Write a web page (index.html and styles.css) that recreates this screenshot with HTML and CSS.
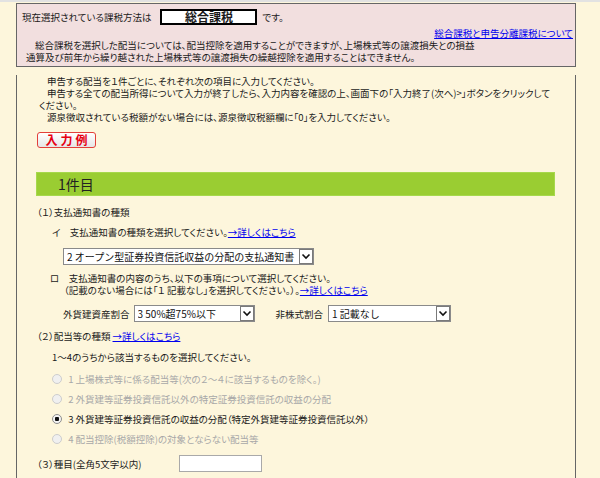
FILE: index.html
```html
<!DOCTYPE html>
<html lang="ja">
<head>
  <meta charset="UTF-8" />
  <title>配当所得の入力</title>
  <link rel="stylesheet" href="styles.css">
</head>
<body>
  <div class="page">

    <div class="notice">
      <div class="current">
        <span>現在選択されている課税方法は</span>
        <span class="method">総合課税</span>
        <span>です。</span>
      </div>
      <div class="notice-link"><a href="#">総合課税と申告分離課税について</a></div>
      <p class="notice-text">総合課税を選択した配当については、配当控除を適用することができますが、上場株式等の譲渡損失との損益<br>通算及び前年から繰り越された上場株式等の譲渡損失の繰越控除を適用することはできません。</p>
    </div>

    <div class="content">
      <div class="guide">
        <p>申告する配当を１件ごとに、それぞれ次の項目に入力してください。</p>
        <p>申告する全ての配当所得について入力が終了したら、入力内容を確認の上、画面下の「入力終了(次へ)&gt;」ボタンをクリックして<br>ください。</p>
        <p>源泉徴収されている税額がない場合には、源泉徴収税額欄に「0」を入力してください。</p>
      </div>

      <button class="example-btn">入力例</button>

      <h2 class="item-title">1件目</h2>

      <div class="label">（１）支払通知書の種類</div>
      <div class="sub sub-i">イ　支払通知書の種類を選択してください。<a href="#">→詳しくはこちら</a></div>
      <div class="select select-kind">
        <select>
          <option>2 オープン型証券投資信託収益の分配の支払通知書</option>
        </select>
        <svg class="arrow" width="14" height="15" viewBox="0 0 14 15"><rect x="0.5" y="0.5" width="13" height="14" fill="#fff" stroke="#7a7a7a"/><polyline points="3.5,5.5 7,9 10.5,5.5" fill="none" stroke="#111" stroke-width="1.6"/></svg>
      </div>

      <div class="sub sub-ro">ロ　支払通知書の内容のうち、以下の事項について選択してください。</div>
      <div class="sub-note">（記載のない場合には「１ 記載なし」を選択してください。）。<a href="#">→詳しくはこちら</a></div>

      <div class="ratio-row">
        <span>外貨建資産割合</span>
        <div class="select select-foreign">
          <select>
            <option>3 50%超75%以下</option>
          </select>
          <svg class="arrow" width="14" height="15" viewBox="0 0 14 15"><rect x="0.5" y="0.5" width="13" height="14" fill="#fff" stroke="#7a7a7a"/><polyline points="3.5,5.5 7,9 10.5,5.5" fill="none" stroke="#111" stroke-width="1.6"/></svg>
        </div>
        <span class="ratio-second">非株式割合</span>
        <div class="select select-stock">
          <select>
            <option>1 記載なし</option>
          </select>
          <svg class="arrow" width="14" height="15" viewBox="0 0 14 15"><rect x="0.5" y="0.5" width="13" height="14" fill="#fff" stroke="#7a7a7a"/><polyline points="3.5,5.5 7,9 10.5,5.5" fill="none" stroke="#111" stroke-width="1.6"/></svg>
        </div>
      </div>

      <div class="label label-2">（２）配当等の種類 <a href="#">→詳しくはこちら</a></div>
      <div class="choose">1～4のうちから該当するものを選択してください。</div>

      <div class="radios">
        <label class="radio disabled"><input type="radio" name="kind" disabled> 1 上場株式等に係る配当等(次の２～４に該当するものを除く。)</label>
        <label class="radio disabled"><input type="radio" name="kind" disabled> 2 外貨建等証券投資信託以外の特定証券投資信託の収益の分配</label>
        <label class="radio"><input type="radio" name="kind" checked> 3 外貨建等証券投資信託の収益の分配（特定外貨建等証券投資信託以外）</label>
        <label class="radio disabled"><input type="radio" name="kind" disabled> 4 配当控除(税額控除)の対象とならない配当等</label>
      </div>

      <div class="name-row">
        <span class="name-label">（３）種目(全角5文字以内)</span>
        <input type="text" class="name-input">
      </div>
    </div>

  </div>
</body>
</html>
```

FILE: styles.css
```css
body {
  margin: 0;
  background: #fdf6dc;
  border-top: 2px solid #e2e2e2;
  font-family: "Noto Sans CJK JP", sans-serif;
  font-size: 9.5px;
  color: #1a1a1a;
  font-feature-settings: "palt";
}
a {
  color: #0000ee;
}
.page {
  margin-left: 16px;
  width: 560px;
}

/* pink box at the top */
.notice {
  margin-top: 1px;
  background: #f2dfdf;
  border: 1px solid #666;
  padding: 0 2px 3px 5px;
}
.current {
  display: flex;
  align-items: center;
  height: 16px;
  margin-top: 5px;
}
.method {
  display: inline-block;
  width: 93px;
  height: 12px;
  margin: 0 5px 0 9px;
  border: 2px solid #000;
  background: #fff;
  font-size: 12px;
  font-weight: bold;
  line-height: 12px;
  text-align: center;
}
.notice-link {
  margin-top: 2px;
  line-height: 12px;
  text-align: right;
}
.notice-text {
  margin: 0 0 0 4px;
  line-height: 12px;
  text-indent: 9px;
  white-space: nowrap;
}

/* main panel */
.content {
  border-left: 1px solid #666;
  border-right: 1px solid #666;
  padding: 0 20px 40px 20px;
}
.guide {
  margin: 8px 0 0 2px;
  line-height: 12px;
  white-space: nowrap;
}
.guide p {
  margin: 0;
  text-indent: 8px;
}
.example-btn {
  display: block;
  margin-top: 9px;
  width: 59px;
  height: 16px;
  padding: 0 0 0 3px;
  border: 1px solid #e2403a;
  border-radius: 3px;
  background: linear-gradient(#ffffff, #e6e6e6);
  color: #e60012;
  font-family: "Noto Sans CJK JP", sans-serif;
  font-size: 12px;
  font-weight: bold;
  letter-spacing: 3px;
  line-height: 14px;
}
.item-title {
  box-sizing: border-box;
  margin: 24px 0 0 -1px;
  height: 24px;
  padding-left: 21px;
  background: #9acd32;
  border: 1px solid #a6d84c;
  font-size: 14px;
  font-weight: normal;
  line-height: 22px;
  color: #222;
}
.label {
  margin-top: 10px;
  line-height: 12px;
}
.sub {
  line-height: 12px;
}
.sub-i {
  margin: 8px 0 0 15px;
}
.sub-ro {
  margin: 7px 0 0 13px;
}
.sub-note {
  margin-left: 27px;
  line-height: 12px;
}

/* select boxes */
.select {
  position: relative;
  display: inline-block;
  vertical-align: middle;
}
.select select {
  appearance: none;
  -webkit-appearance: none;
  box-sizing: border-box;
  height: 17px;
  padding: 0 16px 0 3px;
  border: 1px solid #8a8a8a;
  border-radius: 0;
  background: #fff;
  color: #111;
  font-family: "Noto Sans CJK JP", sans-serif;
  font-size: 10px;
  line-height: 15px;
}
.select .arrow {
  position: absolute;
  top: 1px;
  right: 1px;
  pointer-events: none;
}
.select-kind {
  display: block;
  width: 251px;
  margin: 10px 0 0 26px;
}
.select-kind select {
  width: 251px;
}
.ratio-row {
  display: flex;
  align-items: center;
  margin: 9px 0 0 26px;
}
.select-foreign {
  margin-left: 4px;
}
.select-foreign select {
  width: 121px;
}
.ratio-second {
  margin-left: 21px;
}
.select-stock {
  margin-left: 5px;
}
.select-stock select {
  width: 123px;
}

.label-2 {
  margin-top: 8px;
}
.choose {
  margin: 9px 0 0 15px;
  line-height: 12px;
}

/* radio list */
.radios {
  margin: 6px 0 0 15px;
}
.radio {
  display: flex;
  align-items: center;
  height: 20px;
  white-space: pre;
}
.radio.disabled {
  color: #a8a8a8;
}
.radio input {
  appearance: none;
  -webkit-appearance: none;
  box-sizing: border-box;
  width: 10px;
  height: 10px;
  margin: 0 4px 0 0;
  border: 1px solid #8e8e8e;
  border-radius: 50%;
  background: radial-gradient(#ffffff, #e4e4e4);
}
.radio.disabled input {
  border-color: #cdcdcd;
  background: #f0f0f0;
}
.radio input:checked {
  background: radial-gradient(circle, #111 0, #111 2px, #f4f4f4 2.5px);
}

.name-row {
  display: flex;
  align-items: center;
  margin-top: 6px;
}
.name-label {
  width: 142px;
}
.name-input {
  box-sizing: border-box;
  width: 83px;
  height: 17px;
  margin: 0;
  border: 1px solid #a9a9a9;
  background: #fff;
}
```
